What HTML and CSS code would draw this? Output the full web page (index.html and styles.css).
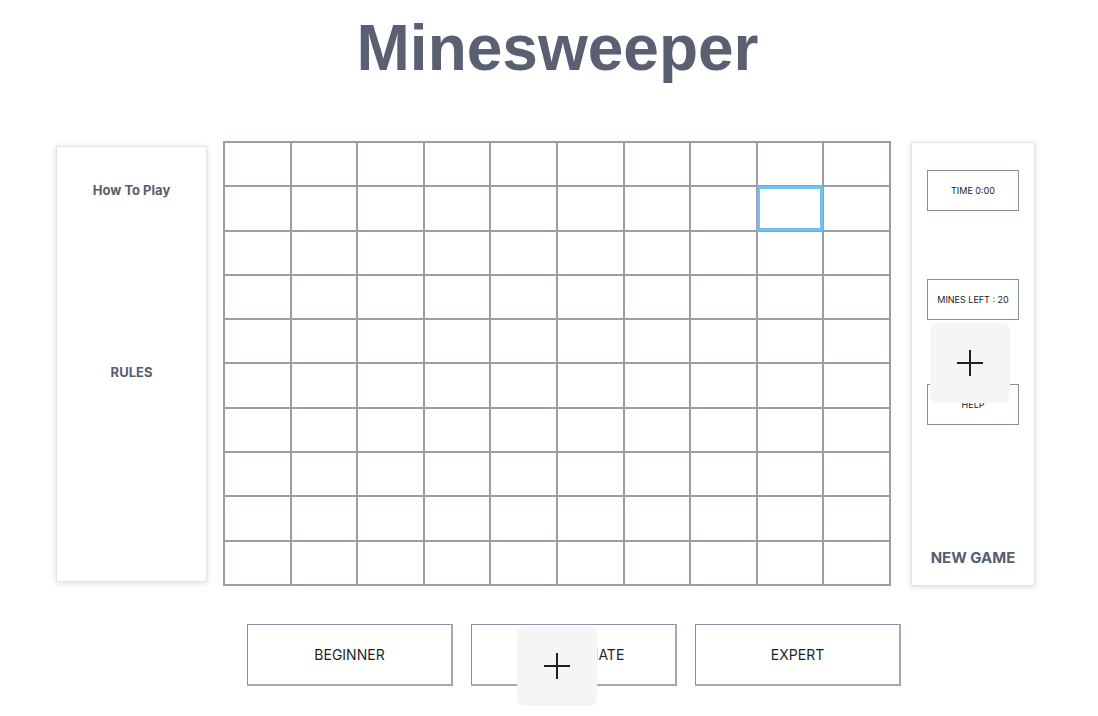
FILE: index.html
```html
<!DOCTYPE html>
<html lang="en">
<head>
<meta charset="utf-8">
<title>Minesweeper</title>
<link rel="stylesheet" href="styles.css">
</head>
<body>
<h1 class="title">Minesweeper</h1>
<div class="main">
  <aside class="side-left">
    <div class="label how">How To Play</div>
    <div class="label rules">RULES</div>
  </aside>
  <div class="board">
    <div class="cell"></div><div class="cell"></div><div class="cell"></div><div class="cell"></div><div class="cell"></div><div class="cell"></div><div class="cell"></div><div class="cell"></div><div class="cell"></div><div class="cell"></div>
    <div class="cell"></div><div class="cell"></div><div class="cell"></div><div class="cell"></div><div class="cell"></div><div class="cell"></div><div class="cell"></div><div class="cell"></div><div class="cell active"></div><div class="cell"></div>
    <div class="cell"></div><div class="cell"></div><div class="cell"></div><div class="cell"></div><div class="cell"></div><div class="cell"></div><div class="cell"></div><div class="cell"></div><div class="cell"></div><div class="cell"></div>
    <div class="cell"></div><div class="cell"></div><div class="cell"></div><div class="cell"></div><div class="cell"></div><div class="cell"></div><div class="cell"></div><div class="cell"></div><div class="cell"></div><div class="cell"></div>
    <div class="cell"></div><div class="cell"></div><div class="cell"></div><div class="cell"></div><div class="cell"></div><div class="cell"></div><div class="cell"></div><div class="cell"></div><div class="cell"></div><div class="cell"></div>
    <div class="cell"></div><div class="cell"></div><div class="cell"></div><div class="cell"></div><div class="cell"></div><div class="cell"></div><div class="cell"></div><div class="cell"></div><div class="cell"></div><div class="cell"></div>
    <div class="cell"></div><div class="cell"></div><div class="cell"></div><div class="cell"></div><div class="cell"></div><div class="cell"></div><div class="cell"></div><div class="cell"></div><div class="cell"></div><div class="cell"></div>
    <div class="cell"></div><div class="cell"></div><div class="cell"></div><div class="cell"></div><div class="cell"></div><div class="cell"></div><div class="cell"></div><div class="cell"></div><div class="cell"></div><div class="cell"></div>
    <div class="cell"></div><div class="cell"></div><div class="cell"></div><div class="cell"></div><div class="cell"></div><div class="cell"></div><div class="cell"></div><div class="cell"></div><div class="cell"></div><div class="cell"></div>
    <div class="cell"></div><div class="cell"></div><div class="cell"></div><div class="cell"></div><div class="cell"></div><div class="cell"></div><div class="cell"></div><div class="cell"></div><div class="cell"></div><div class="cell"></div>
  </div>
  <aside class="side-right">
    <div class="stat time">TIME 0:00</div>
    <div class="stat mines">MINES LEFT : 20</div>
    <div class="stat help">HELP</div>
    <div class="label newgame">NEW GAME</div>
  </aside>
</div>
<div class="levels">
  <button class="level">BEGINNER</button>
  <button class="level">INTERMEDIATE</button>
  <button class="level">EXPERT</button>
</div>
<div class="overlay overlay-bottom">
  <svg width="26" height="26" viewBox="0 0 26 26"><path d="M13 0V26M0 13H26" stroke="#1f1f1f" stroke-width="2" fill="none"/></svg>
</div>
<div class="overlay overlay-right">
  <svg width="26" height="26" viewBox="0 0 26 26"><path d="M13 0V26M0 13H26" stroke="#1f1f1f" stroke-width="2" fill="none"/></svg>
</div>
</body>
</html>
```
FILE: styles.css
```css
* { box-sizing: border-box; }
body {
  margin: 0;
  background: #ffffff;
  font-family: Inter, "Liberation Sans", sans-serif;
  position: relative;
  min-height: 716px;
}
.title {
  margin: 8px 0 0 0;
  padding-left: 17px;
  text-align: center;
  font-family: "Liberation Sans", Arial, sans-serif;
  font-size: 64px;
  line-height: 80px;
  font-weight: 700;
  color: #5a6072;
}
.main {
  margin-top: 53px;
  display: flex;
  align-items: center;
  padding-left: 56px;
}
.side-left {
  width: 151px;
  height: 436px;
  margin-right: 16px;
  background: #fff;
  border: 1px solid #e4e4e4;
  box-shadow: 0 1px 6px rgba(0, 0, 0, 0.14);
  display: flex;
  flex-direction: column;
  align-items: center;
  padding-top: 35px;
}
.label {
  color: #575e70;
  font-weight: 700;
  text-align: center;
}
.how { font-size: 13px; line-height: 16px; }
.rules { font-size: 13px; line-height: 16px; margin-top: 166px; }
.board {
  width: 668px;
  height: 445px;
  border: 1px solid #9a9eac;
  display: grid;
  grid-template-columns: repeat(10, 1fr);
  grid-template-rows: repeat(10, 1fr);
}
.cell {
  border: 1px solid #9a9eac;
  background: #fff;
}
.cell.active {
  border: 3px solid #72c0ee;
}
.side-right {
  width: 124px;
  height: 444px;
  margin-left: 20px;
  background: #fff;
  border: 1px solid #e4e4e4;
  box-shadow: 0 1px 6px rgba(0, 0, 0, 0.14);
  display: flex;
  flex-direction: column;
  align-items: center;
  padding-top: 27px;
}
.stat {
  width: 92px;
  height: 41px;
  border: 1px solid #8b90a0;
  display: flex;
  align-items: center;
  justify-content: center;
  font-size: 9px;
  color: #222;
}
.mines { margin-top: 68px; }
.help { margin-top: 64px; }
.newgame {
  margin-top: auto;
  margin-bottom: 18px;
  font-size: 15px;
  line-height: 18px;
}
.levels {
  display: flex;
  gap: 18px;
  margin-top: 38px;
  padding-left: 247px;
}
.level {
  width: 206px;
  height: 62px;
  background: #fff;
  border: 1px solid #8b90a0;
  border-right: 2px solid #a4a8b4;
  border-bottom: 2px solid #a4a8b4;
  font-family: Inter, "Liberation Sans", sans-serif;
  font-size: 14px;
  color: #1f1f1f;
  padding: 0;
}
.overlay {
  position: absolute;
  width: 80px;
  height: 80px;
  border-radius: 8px;
  background: #f5f5f5;
  display: flex;
  align-items: center;
  justify-content: center;
}
.overlay-bottom { left: 517px; top: 626px; }
.overlay-right { left: 930px; top: 323px; }
```
